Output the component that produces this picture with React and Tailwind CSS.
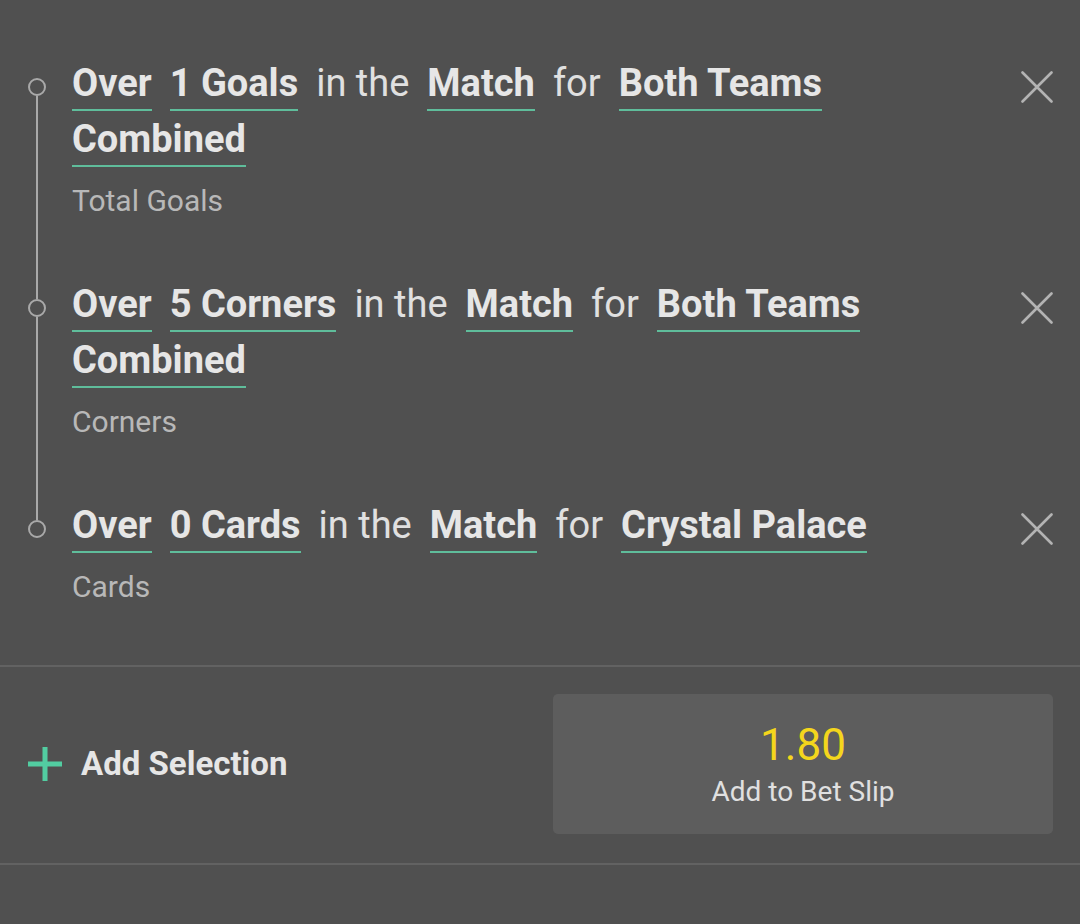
import React from 'react';

const selections = [
  {
    id: 1,
    parts: [
      { text: 'Over', pick: true },
      { text: '1 Goals', pick: true },
      { text: 'in the' },
      { text: 'Match', pick: true },
      { text: 'for' },
      { text: 'Both Teams', pick: true },
      { text: 'Combined', pick: true },
    ],
    market: 'Total Goals',
  },
  {
    id: 2,
    parts: [
      { text: 'Over', pick: true },
      { text: '5 Corners', pick: true },
      { text: 'in the' },
      { text: 'Match', pick: true },
      { text: 'for' },
      { text: 'Both Teams', pick: true },
      { text: 'Combined', pick: true },
    ],
    market: 'Corners',
  },
  {
    id: 3,
    parts: [
      { text: 'Over', pick: true },
      { text: '0 Cards', pick: true },
      { text: 'in the' },
      { text: 'Match', pick: true },
      { text: 'for' },
      { text: 'Crystal Palace', pick: true },
    ],
    market: 'Cards',
  },
];

const CloseIcon = () => (
  <svg width="32" height="32" viewBox="0 0 32 32" fill="none">
    <path d="M1.5 1.5L30.5 30.5M30.5 1.5L1.5 30.5" stroke="#b3b3b3" strokeWidth="2.6" strokeLinecap="round" />
  </svg>
);

const PlusIcon = () => (
  <svg width="34" height="34" viewBox="0 0 34 34">
    <rect x="14.5" y="0" width="5" height="34" fill="#52cda1" />
    <rect x="0" y="14.5" width="34" height="5" fill="#52cda1" />
  </svg>
);

const SelectionRow = ({ selection, first, last }) => (
  <div className="flex">
    {/* timeline */}
    <div className="flex w-[18px] shrink-0 flex-col items-center">
      <div className={`h-[50px] w-[2px] ${first ? 'bg-transparent' : 'bg-[#a9a9a9]'}`} />
      <div className="h-[18px] w-[18px] shrink-0 rounded-full border-2 border-[#a9a9a9]" />
      <div className={`w-[2px] flex-1 ${last ? 'bg-transparent' : 'bg-[#a9a9a9]'}`} />
    </div>

    <div className="ml-[26px] flex-1 pt-[33px] pb-[31px]">
      <div className="flex flex-wrap gap-x-[18px] gap-y-[6px]">
        {selection.parts.map((part, i) => (
          <span
            key={i}
            className={`inline-block border-b-2 pb-[4px] text-[38px] leading-[44px] ${
              part.pick
                ? 'border-[#5fbd9b] font-bold text-[#e6e6e6]'
                : 'border-transparent font-normal text-[#e0e0e0]'
            }`}
          >
            {part.text}
          </span>
        ))}
      </div>
      <div className="mt-[17px] text-[30px] leading-[34px] text-[#b8b8b8]">{selection.market}</div>
    </div>

    <button className="ml-[40px] mt-[43px] h-[32px] w-[32px] shrink-0 self-start">
      <CloseIcon />
    </button>
  </div>
);

export default function App() {
  return (
    <div className="min-h-[924px] bg-[#505050] font-['Roboto',sans-serif]">
      <div className="pl-[28px] pt-[28px] pb-[30px] pr-[27px]">
        {selections.map((s, i) => (
          <SelectionRow key={s.id} selection={s} first={i === 0} last={i === selections.length - 1} />
        ))}
      </div>

      <div className="h-[2px] bg-[#626262]" />

      <div className="flex items-center justify-between pl-[28px] pr-[27px] pt-[27px] pb-[29px]">
        <button className="flex items-center gap-[19px]">
          <PlusIcon />
          <span className="text-[33px] font-bold leading-[40px] text-[#e6e6e6]">Add Selection</span>
        </button>
        <button className="flex h-[140px] w-[500px] flex-col items-center justify-center rounded-[5px] bg-[#5d5d5d]">
          <span className="text-[44px] leading-[48px] text-[#f4d61c]">1.80</span>
          <span className="mt-[7px] text-[28px] leading-[32px] text-[#e0e0e0]">Add to Bet Slip</span>
        </button>
      </div>

      <div className="h-[2px] bg-[#626262]" />
    </div>
  );
}
